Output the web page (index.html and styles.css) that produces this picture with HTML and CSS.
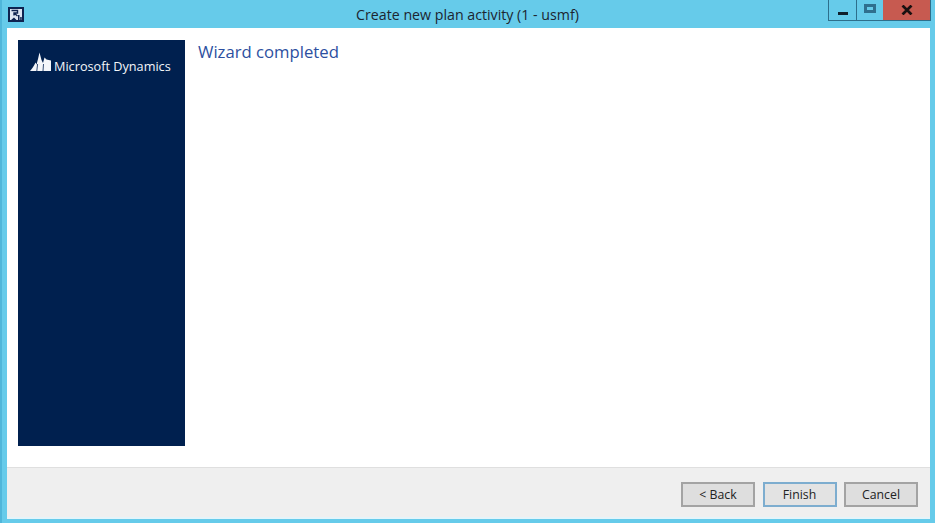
FILE: index.html
```html
<!DOCTYPE html>
<html lang="en">
<head>
  <meta charset="UTF-8">
  <title>Create new plan activity (1 - usmf)</title>
  <link rel="stylesheet" href="styles.css">
</head>
<body>
  <div class="window">
    <div class="titlebar">
      <svg class="app-icon" width="16" height="15" viewBox="0 0 16 15">
        <rect width="16" height="15" fill="#0f2350"/>
        <rect x="2" y="2" width="12" height="11" fill="#dfe6f2"/>
        <path d="M3.500 3.500h6v2.500h-3.500v2.500M6 6l3.500 3" fill="none" stroke="#0f2350" stroke-width="1.400"/>
        <path d="M10 8h1.500v5H10zM12.200 10h1.500v3h-1.500zM3 13l3-2.500 2.500 2.500z" fill="#0f2350"/>
      </svg>
      <span class="title">Create new plan activity (1 - usmf)</span>
      <div class="win-buttons">
        <button class="win-btn min"><span class="min-glyph"></span></button>
        <button class="win-btn max"><span class="max-glyph"></span></button>
        <button class="win-btn close">
          <svg width="12" height="10" viewBox="0 0 12 10"><path d="M1.500 .6l9 8.800M10.500 .6l-9 8.800" stroke="#1a1010" stroke-width="2.800" fill="none"/></svg>
        </button>
      </div>
    </div>
    <div class="client">
      <div class="content">
        <div class="sidebar">
          <div class="logo">
            <svg width="21" height="19" viewBox="0 0 21 19">
              <path d="M0 19C2 17 4 14 5.500 10.500L6.500 12.500 8 7 9.500 .5 11.500 8 13 11 14.500 5.500 16.500 7.500 21 8.500V19H0z" fill="#f4f6fa"/>
              <path d="M6.800 19L7.600 12M13 19L13.500 12" stroke="#00204f" stroke-width=".8" fill="none"/>
            </svg>
            <span class="logo-text">Microsoft Dynamics</span>
          </div>
        </div>
        <h1 class="heading">Wizard completed</h1>
      </div>
      <div class="footer">
        <button class="btn">&lt; Back</button>
        <button class="btn btn-default">Finish</button>
        <button class="btn">Cancel</button>
      </div>
    </div>
  </div>
</body>
</html>
```

FILE: styles.css
```css
*{margin:0;padding:0;box-sizing:border-box;}
html,body{height:100%;}
body{overflow:hidden;background:#66cbea;font-family:"Open Sans","Noto Sans",sans-serif;color:#222;}
.window{display:flex;flex-direction:column;height:523px;padding:0 5px 4px 5px;border-left:2px solid #4fb6da;background:#66cbea;}
.titlebar{position:relative;display:flex;justify-content:center;align-items:center;flex:none;height:28px;padding-right:2px;}
.app-icon{position:absolute;left:1px;top:7px;}
.title{font-size:14.200px;color:#1c2530;}
.win-buttons{position:absolute;right:-1px;top:0;display:flex;height:21px;border:1px solid #2d6f8c;border-top:0;}
.win-btn{display:flex;justify-content:center;align-items:center;height:100%;border:0;background:transparent;}
.win-btn.min{width:28px;border-right:1px solid #2d6f8c;}
.win-btn.max{width:26px;}
.win-btn.close{width:47px;background:#c75a50;}
.min-glyph{display:block;width:10px;height:3px;margin-top:6px;background:#10202c;}
.max-glyph{display:block;width:12px;height:9px;margin-bottom:4px;border:3px solid #2f6f8e;}
.client{display:flex;flex-direction:column;flex:1;min-height:0;background:#fff;}
.content{display:flex;flex:1;align-items:flex-start;padding:12px 11px 0;}
.sidebar{flex:none;width:167px;height:406px;padding:12px 12px;background:#00204f;}
.logo{display:flex;align-items:flex-end;color:#f4f6fa;}
.logo-text{margin:0 0 -3px 3px;font-size:12.700px;line-height:16px;white-space:nowrap;}
.heading{margin:0 0 0 13px;font-size:16.700px;font-weight:400;line-height:24px;color:#2c4fa0;}
.footer{display:flex;justify-content:flex-end;align-items:flex-start;gap:7.500px;flex:none;height:52px;padding:14px 12px 0 0;border-top:1px solid #dfdfdf;border-bottom:2px solid #e4f4fa;background:#efefef;}
.btn{width:74px;height:25px;border:2px solid #a3a3a3;background:#dedede;font-family:inherit;font-size:12.300px;color:#222;}
.btn-default{border-color:#7dadcf;background:#e3e3e3;}
```
